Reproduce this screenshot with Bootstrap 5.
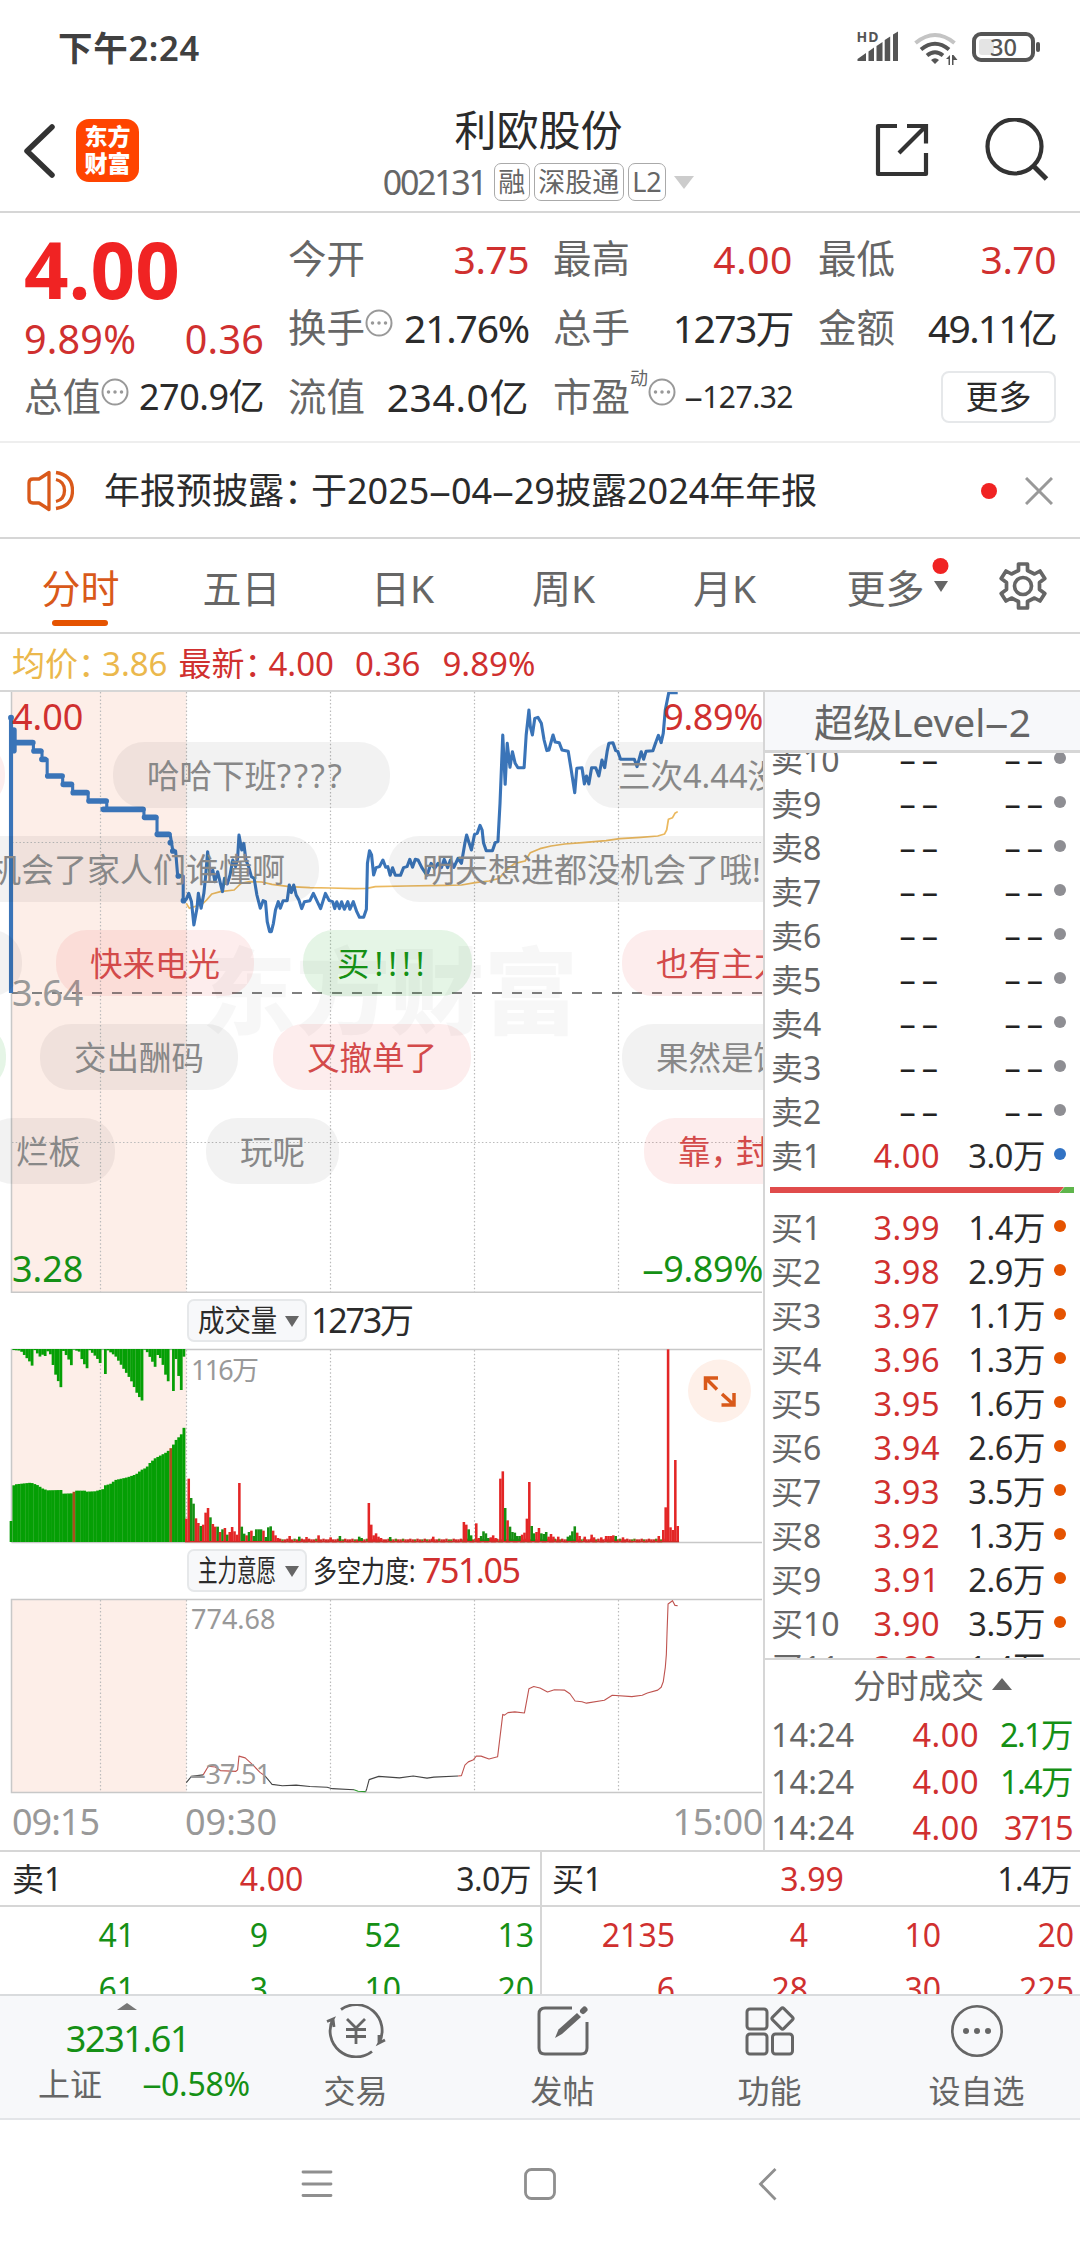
<!DOCTYPE html>
<html lang="zh-CN">
<head>
<meta charset="utf-8">
<meta name="viewport" content="width=device-width, initial-scale=1">
<title>利欧股份 002131</title>
<link href="https://cdn.jsdelivr.net/npm/bootstrap@5.3.0/dist/css/bootstrap.min.css" rel="stylesheet">
<style>
:root{--up:#d0302f;--down:#159015;--ink:#2b2b2b;--mute:#666;--soft:#999;--rule:#d6d6d6;--brand:#d9591a}
html,body{width:1080px;height:2248px;overflow:hidden}
body{font-family:"Noto Sans","Noto Sans CJK SC",sans-serif;color:var(--ink);background:#fff;line-height:1.2}
.c-up{color:var(--up)}.c-down{color:var(--down)}.c-mute{color:var(--mute)}.c-soft{color:var(--soft)}
svg{display:block;flex:none}
.wd{display:inline-block;transform:scaleX(1.22);margin:0 .05em}
.tight{letter-spacing:-9px}
.statusbar{height:96px;padding:0 40px 0 58px}
.clock{font-size:34.5px;font-weight:600;color:#404040;letter-spacing:.7px}
.titlebar{height:117px;border-bottom:2px solid var(--rule)}
.side-l{width:300px;padding:0 0 6px 22px}
.side-r{width:300px;padding:0 30px 7px 0}
.applogo{width:63px;height:63px;border-radius:13px;background:#ff4400;color:#fff;font-size:23px;line-height:27px;font-weight:900;margin-left:19px;padding-top:4px}
.sname{font-size:42px;line-height:50px}
.scode{font-size:34px;line-height:38px;letter-spacing:-2.3px}
.stag{border:1.5px solid #aaa;border-radius:7px;height:38px;line-height:35px;font-size:27px;padding:0 3.5px;color:var(--mute)}
.tri-d{width:0;height:0;border:solid transparent;border-width:13px 10px 0;border-top-color:#ccc}
.quotes{height:230px;border-bottom:2px solid #eee;padding:11px 24px 0}
.qrow{height:69px;font-size:39px;line-height:69px;white-space:nowrap}
.qlab{color:var(--mute);font-size:38.5px}
.qval{letter-spacing:-.5px}
.qwide{letter-spacing:.6px}
.col-a{width:240px}.col-b{width:241px;margin-left:24px}.col-c{width:240px;margin-left:24px}.col-d{width:238px;margin-left:25px}
.bigp{height:92px;line-height:90px;font-size:78px;font-weight:700;color:#f02323}
.chg{height:46px;line-height:46px;font-size:39.5px;letter-spacing:.2px}
.morebtn{width:115px;height:52px;border:2px solid #e6e8ea;border-radius:8px;font-size:33px;line-height:46px;padding:0;color:var(--ink)}
.sup-d{font-size:18px;line-height:20px;align-self:flex-start;margin-top:6px}
.notice{height:96px;border-bottom:2px solid var(--rule);padding:2px 27px 0}
.notice-t{font-size:36px;margin-left:30px}
.nclose{margin-left:28px}
.rdot{width:16px;height:16px;border-radius:50%;background:#f02323}
.ktabs{height:95px;border-bottom:2px solid var(--rule)}
.ktab{width:161px;height:93px;font-size:39px;line-height:97px;color:var(--mute);text-align:center;position:relative;padding:0}
.ktab.active{color:var(--brand)}
.ktab.active::after{content:"";position:absolute;left:52px;top:81px;width:56px;height:6px;border-radius:3px;background:#e55300}
.gear{margin:16px 0 0 32px}
.legendbar{height:58px;border-bottom:2px solid var(--rule);font-size:33px;line-height:60px;padding-left:12px;white-space:nowrap}
.mainarea{height:1158px}
.charts{width:763px;position:relative;overflow:hidden}
.charts>svg{position:absolute;left:0;top:0}
.overlay{position:absolute;white-space:nowrap}
.axis{font-size:36px;line-height:42px}
.axis-s{font-size:27px;line-height:30px;color:#999}
.bub{position:absolute;height:66px;border-radius:31px;padding:0 34px;font-size:32.5px;line-height:67px;white-space:nowrap;background:rgba(0,0,0,.05);color:#888}
.bub.r{background:rgba(235,50,50,.09);color:#d34a4a}
.bub.g{background:rgba(20,160,30,.11);color:#159015}
.wm{font-size:94px;font-weight:900;line-height:100px;color:rgba(0,0,0,.032)}
.indbar{position:absolute;left:187px;height:43px}
.indbtn{width:120px;height:43px;border:2px solid #e6e8ea;border-radius:7px;background:#f7f8fa;position:relative;padding:0 9px}
.indbtn .tri-d{border-width:11px 7px 0;border-top-color:#666}
.sq{display:inline-block;transform-origin:0 50%;white-space:nowrap;font-size:30px;line-height:38px}
.indval{font-size:34px;line-height:43px}
.book{width:317px;border-left:2px solid var(--rule)}
.bhead{height:61px;background:#f7f8fa;border-bottom:3px solid var(--rule);font-size:39px;line-height:60px;text-align:center}
.blist{height:905px;overflow:hidden}
.brow{height:44px;line-height:44px;font-size:32.5px;padding:0 12px 0 6px;white-space:nowrap}
.brow .b1{width:81px;color:var(--mute);font-size:32px}.brow .b2{width:88px;text-align:right;letter-spacing:.5px}.brow .b3{width:105px;text-align:right;letter-spacing:-.4px}
.dash{letter-spacing:6px;margin-right:-4px;color:#222}
.bdot{width:12px;height:12px;border-radius:50%;margin:-4px 0 0 9px}
.ratio{height:6px;margin:9px 6px 12px 5px}
.btitle{height:54px;border-top:2px solid var(--rule);font-size:32.8px;color:var(--mute)}
.trow{height:46.5px;line-height:46px;font-size:32.5px;padding:0 8px 0 6px}
.depth{height:144px;border-top:2px solid var(--rule);overflow:hidden}
.dcol{width:540px}.dcol+.dcol{border-left:2px solid var(--rule)}
.dhead{height:55px;border-bottom:2px solid var(--rule);font-size:32px;line-height:54px;padding:0 9px 0 12px}
.dcol+.dcol .dhead{padding:0 8px 0 10px}
.dnum{height:54px;line-height:55px;font-size:32px;text-align:right;padding-right:6px}
.dnum span{width:133px}
.footnav{height:126px;background:#f7f8fa;border-top:2px solid #d9dbdd;border-bottom:2px solid #e3e5e8;color:var(--mute);font-size:32px}
.fidx{width:252px}.fitem{width:207px}
.fitem span{margin-top:14px}
.sysnav{height:129px}
</style>
</head>
<body>
<div class="statusbar d-flex align-items-center justify-content-between">
  <span class="clock">下午2:24</span>
  <svg width="184" height="36" viewBox="857 30 184 36" fill="#555">
    <text x="857.500" y="42" font-size="14" font-weight="700" textLength="22">HD</text>
    <path d="M858.500 61v-2l8.500-6v8zM869.500 61V51.500l5.500-4V61zM877.500 61V46l6-4v19zM885.700 61V40l5.500-3.500V61zM894 61V34.500l5-3V61z"/>
    <g fill="none" stroke="#555" stroke-width="4"><path stroke="#c4c4c4" d="M916.500 43q19.500-16 39 0"/><path d="M922 49.500q14-11.500 28 0M928 55.500q8-6.500 16 0"/></g>
    <path d="M932 60q4-3.500 8 0l-4 4zM947 59l4-4v10h-1.500v-6zM953 55h1.500l4 5h-4v5H953z"/>
    <rect x="975" y="34" width="59" height="26" rx="7" fill="none" stroke="#555" stroke-width="4"/>
    <rect x="980" y="39" width="15" height="16" rx="3" fill="#e4e4e4"/><rect x="1037" y="42" width="4" height="10" rx="2"/>
    <text x="991" y="56" font-size="23.500" font-weight="500" textLength="27" lengthAdjust="spacingAndGlyphs">30</text>
  </svg>
</div>
<header class="titlebar d-flex justify-content-between">
  <div class="side-l d-flex align-items-center">
    <svg width="35" height="56" viewBox="22 123 35 56" fill="none" stroke="#333" stroke-width="5.500" stroke-linecap="round" stroke-linejoin="round"><path d="M52 127 27 151l25 24"/></svg>
    <div class="applogo text-center">东方<br>财富</div>
  </div>
  <div class="d-flex flex-column align-items-center" style="padding:9px 3px 0 0">
    <div class="sname">利欧股份</div>
    <div class="d-flex align-items-center mt-2"><span class="scode c-mute me-2">002131</span><span class="stag">融</span><span class="stag ms-1">深股通</span><span class="stag ms-1">L2</span><span class="tri-d ms-2"></span></div>
  </div>
  <div class="side-r d-flex align-items-center justify-content-end">
    <svg width="176" height="64" viewBox="874 119 176 64" fill="none" stroke="#333" stroke-width="4.200"><path stroke-linejoin="round" d="M897 127h-19v48h48v-21"/><path d="M907 127h19v17.500M899 154l27-27"/><circle cx="1014.500" cy="147.500" r="27"/><path stroke-width="5" d="m1033.500 167 13 13"/></svg>
  </div>
</header>

<section class="quotes d-flex">
  <div class="col-a">
    <div class="bigp">4.00</div>
    <div class="chg d-flex justify-content-between c-up"><span>9.89%</span><span>0.36</span></div>
    <div class="qrow d-flex justify-content-between"><span class="qlab d-flex">总值<svg class="mt-3" width="28" height="28" viewBox="0 0 28 28"><circle cx="14" cy="14" r="12.500" fill="none" stroke="#999" stroke-width="2"/><path d="M7.500 14h.01M14 14h.01M20.500 14h.01" stroke="#999" stroke-width="3.500" stroke-linecap="round"/></svg></span><span class="qval" style="font-size:36px">270.9亿</span></div>
  </div>
  <div class="col-b">
    <div class="qrow d-flex justify-content-between"><span class="qlab">今开</span><span class="qval c-up">3.75</span></div>
    <div class="qrow d-flex justify-content-between"><span class="qlab d-flex">换手<svg class="mt-3" width="28" height="28" viewBox="0 0 28 28"><circle cx="14" cy="14" r="12.500" fill="none" stroke="#999" stroke-width="2"/><path d="M7.500 14h.01M14 14h.01M20.500 14h.01" stroke="#999" stroke-width="3.500" stroke-linecap="round"/></svg></span><span class="qval" style="letter-spacing:-1.2px">21.76%</span></div>
    <div class="qrow d-flex justify-content-between"><span class="qlab">流值</span><span class="qval qwide">234.0亿</span></div>
  </div>
  <div class="col-c">
    <div class="qrow d-flex justify-content-between"><span class="qlab">最高</span><span class="qval qwide c-up">4.00</span></div>
    <div class="qrow d-flex justify-content-between"><span class="qlab">总手</span><span class="qval" style="letter-spacing:-1.6px">1273万</span></div>
    <div class="qrow d-flex justify-content-between"><span class="qlab d-flex">市盈<span class="sup-d">动</span><svg class="mt-3" width="28" height="28" viewBox="0 0 28 28"><circle cx="14" cy="14" r="12.500" fill="none" stroke="#999" stroke-width="2"/><path d="M7.500 14h.01M14 14h.01M20.500 14h.01" stroke="#999" stroke-width="3.500" stroke-linecap="round"/></svg></span><span class="qval" style="font-size:30px"><span class="wd">–</span>127.32</span></div>
  </div>
  <div class="col-d">
    <div class="qrow d-flex justify-content-between"><span class="qlab">最低</span><span class="qval c-up">3.70</span></div>
    <div class="qrow d-flex justify-content-between"><span class="qlab">金额</span><span class="qval" style="letter-spacing:-1.8px">49.11亿</span></div>
    <div class="qrow d-flex justify-content-end align-items-center"><button class="btn morebtn">更多</button></div>
  </div>
</section>

<section class="notice d-flex align-items-center">
  <svg width="47" height="42" viewBox="27 469 47 42" fill="none" stroke="#d9591a" stroke-width="3.300" stroke-linejoin="round"><path d="M49 471.500v37l-10-6.500h-6q-4 0-4-4v-16q0-4 4-4h6z"/><path d="M56 478.500q8.500 2 8.500 11t-8.500 11M56 471.500q16.500 2.500 16.500 18t-16.500 18" stroke-linecap="butt"/></svg>
  <span class="notice-t">年报预披露<span class="tight">：</span>于2025<span class="wd">–</span>04<span class="wd">–</span>29披露2024年年报</span>
  <span class="rdot ms-auto"></span>
  <svg class="nclose" width="28" height="28" viewBox="0 0 28 28" stroke="#999" stroke-width="3"><path d="M1 1l26 26M27 1 1 27"/></svg>
</section>

<nav class="ktabs nav flex-nowrap">
  <a class="ktab nav-link active">分时</a><a class="ktab nav-link">五日</a><a class="ktab nav-link">日K</a><a class="ktab nav-link">周K</a><a class="ktab nav-link">月K</a>
  <a class="ktab nav-link">更多<svg class="overlay" style="left:127px;top:18px" width="18" height="38"><circle cx="8.500" cy="9" r="8" fill="#f02323"/><path d="M2 24h14l-7 11z" fill="#666"/></svg></a>
  <svg class="gear" width="50" height="60" viewBox="998 555 50 60" fill="none" stroke="#666" stroke-width="3.700" stroke-linejoin="round"><circle cx="1023" cy="586" r="8.500"/><path d="M1018.500 564h9v6.500l7 3.500 5.500-3 4.800 7.500-5.300 4v7l5.300 4-4.800 7.500-5.500-3-7 3.500v6.500h-9v-6.500l-7-3.500-5.500 3-4.800-7.500 5.300-4v-7l-5.300-4 4.800-7.500 5.500 3 7-3.500z"/></svg>
</nav>

<div class="legendbar"><span style="color:#ebb84c">均价<span class="tight">：</span>3.86</span><span class="c-up" style="margin-left:11px">最新<span class="tight">：</span>4.00</span><span class="c-up" style="margin-left:21px">0.36</span><span class="c-up" style="margin-left:22px">9.89%</span></div>

<main class="mainarea d-flex">
  <div class="charts">
    <svg width="763" height="1158" viewBox="0 692 763 1158">
      <path fill="#fdeee8" d="M12 692h174.500v600H12zM12 1350h174.500v192H12zM12 1600h174.500v192H12z"/>
      <g stroke="#bbb" stroke-width="1.200" stroke-dasharray="1.500 2.200"><path d="M100.500 692v600M186.500 692v600M330.500 692v600M474.500 692v600M618.500 692v600M12 842.500h750M12 1142.500h750"/><path d="M100.500 1350v192M186.500 1350v192M330.500 1350v192M474.500 1350v192M618.500 1350v192M100.500 1600v192M186.500 1600v192M330.500 1600v192M474.500 1600v192M618.500 1600v192"/></g>
      <path stroke="#c8c8c8" stroke-width="1.500" fill="none" d="M11.500 692v600.300H762M11.500 1542.500V1349.500H762M11.500 1542.500H762M762 1599.500H11.500v193H762"/>
      <path stroke="#808080" stroke-width="2" stroke-dasharray="10 10" d="M12 993h750"/>
      <g transform="translate(0 530) scale(.34436 .33333)" fill="none" stroke-linejoin="round">
        <path stroke="#ebb95f" stroke-width="5" d="M541 1120 550 1135 565 1130 585 1125 600 1110 615 1092 640 1085 680 1080 692 1068 700 1060 725 1055 760 1056 790 1063 840 1070 900 1073 960 1074 1030 1076 1065 1075 1090 1070 1180 1068 1290 1066 1340 1065 1380 1058 1420 1053 1450 1045 1470 1020 1495 1000 1525 993 1540 968 1568 956 1600 948 1640 942 1700 937 1760 932 1800 926 1860 922 1910 918 1930 912 1936 900 1941 868 1953 863 1960 850 1968 845"/>
        <g stroke="#3a74b8">
          <path stroke-width="12" d="M32 565V1389"/>
          <path stroke-width="17" stroke-linecap="round" d="M32 563v.1M40 600v62M45 638H95M99 663H118M122 688H130M139 738H180M184 763H207M213 788H252M259 813H308M300 838H415M420 862H452M457 913H490M495 938v.1M502 963v.1M518 1038v.1M533 1112v.1"/>
          <path stroke-width="9" d="M97 638V663H122V688H137V738H182V763H211V788H256V813H310V838H418V862H456V913H494L502 963H510L516 1038H532V1112"/>
          <path stroke-width="9" d="M532 1112 541 1108 548 1090 556 1115 563 1185 572 1135 576 1090 584 1135 592 1090 597 1040 603 965 610 1035 618 1020 624 1055 632 1025 640 1060 646 1085 652 1045 660 1062 668 1035 676 990 684 1010 690 985 694 915 702 960 708 940 714 990 722 1010 730 1040 738 1045 746 1095 756 1135 764 1112 771 1115 776 1175 783 1205 788 1205 794 1180 800 1140 808 1115 814 1135 822 1112 834 1112 840 1065 846 1088 853 1065 860 1095 868 1110 876 1136 884 1115 900 1112 910 1090 920 1112 931 1136 945 1090 956 1112 966 1115 972 1136 978 1115 986 1136 992 1115 1000 1138 1010 1115 1016 1138 1026 1115 1036 1145 1044 1162 1056 1162 1064 1138 1067 1000 1073 962 1079 975 1085 1035 1092 1013 1102 1010 1112 990 1120 1012 1126 1010 1133 1036 1140 1013 1148 1036 1163 1036 1172 1013 1182 1010 1190 988 1198 1012 1206 988 1214 990 1225 1013 1240 1036 1252 1000 1262 1015 1272 1000 1282 1013 1290 988 1300 1013 1308 990 1318 1012 1330 985 1340 1000 1350 940 1355 915 1362 938 1369 960 1378 913 1386 910 1394 886 1400 900 1404 938 1412 962 1430 962 1438 938 1446 935 1452 820 1460 615 1467 763 1473 640 1481 712 1488 665 1496 700 1504 713 1522 713 1528 615 1536 540 1540 590 1546 615 1553 565 1562 562 1572 580 1580 630 1588 662 1594 660 1606 615 1612 636 1624 638 1632 660 1650 664 1658 715 1669 788 1675 715 1690 713 1697 762 1703 738 1710 762 1718 713 1730 713 1739 738 1748 690 1756 713 1763 665 1768 640 1780 638 1788 662 1794 664 1802 688 1842 688 1850 710 1862 665 1869 688 1876 664 1896 662 1904 638 1912 616 1920 638 1926 610 1932 540 1942 488 1968 488"/>
        </g>
      </g>
      <g id="vol" transform="translate(0 1280) scale(.34436 .33333)"></g>
      <g transform="translate(0 1680) scale(.34436 .3623)" fill="none" stroke-width="3.200" stroke-linejoin="round">
        <path stroke="#444" d="M541 283 556 266 590 262M770 265 790 288 820 292 860 290 900 294 950 296 965 300 1028 303M1062 308 1065 300 1072 275 1100 266 1160 270 1200 265 1240 271 1260 268 1330 265"/>
        <path stroke="#2c9a2c" d="M1028 303 1040 307 1062 308"/>
        <path stroke="#bf5450" d="M590 262 605 238 625 240 640 250 685 252 690 248 694 210 712 215 735 235 755 255 770 265M1330 265 1340 264 1350 235 1360 226 1375 220 1383 210 1397 210 1420 218 1445 212 1460 95 1465 97 1475 90 1495 88 1523 91 1536 24 1550 18 1568 22 1590 33 1610 27 1640 28 1655 38 1670 58 1690 60 1703 64 1755 56 1778 42 1835 46 1865 42 1880 36 1910 28 1920 20 1926 5 1932-35 1935-70 1937-130 1940-210 1953-219 1960-206 1968-205"/>
      </g>
      <circle cx="719.500" cy="1391" r="31.500" fill="#fef0e9"/>
      <path fill="none" stroke="#d9591a" stroke-width="3.500" d="M718 1378h-12.500v12M706 1378.500l11 11M721.500 1405H734v-12M722 1394l11 10"/>
    </svg>
    <div class="overlay wm" style="left:202px;top:249px">东方财富</div>

    <span class="overlay axis c-up" style="left:12px;top:4px">4.00</span>
    <span class="overlay axis c-up" style="right:0;top:4px;letter-spacing:-.3px">9.89%</span>
    <span class="overlay axis c-soft" style="left:12px;top:280px">3.64</span>
    <span class="overlay axis c-down" style="left:12px;top:556px">3.28</span>
    <span class="overlay axis c-down" style="right:0;top:556px;letter-spacing:-.3px"><span class="wd">–</span>9.89%</span>

    <span class="bub r" style="right:758px;top:50px">红</span>
    <span class="bub" style="left:113px;top:50px;width:277px">哈哈下班<span style="letter-spacing:2.8px">????</span></span>
    <span class="bub" style="left:584px;top:50px">三次4.44没</span>
    <span class="bub" style="right:444px;top:144px;font-size:33px">没机会了家人们谁懂啊</span>
    <span class="bub" style="left:388px;top:144px;font-size:33px">明天想进都没机会了哦!</span>
    <span class="bub" style="right:741px;top:238px">了</span>
    <span class="bub r" style="left:56px;top:238px">快来电光</span>
    <span class="bub g" style="left:303px;top:238px;width:169px;letter-spacing:5px">买!!!!</span>
    <span class="bub r" style="left:622px;top:238px">也有主力</span>
    <span class="bub g" style="right:757px;top:332px">买</span>
    <span class="bub" style="left:40px;top:332px">交出酬码</span>
    <span class="bub r" style="left:273px;top:332px">又撤单了</span>
    <span class="bub" style="left:622px;top:332px">果然是饵</span>
    <span class="bub" style="right:648px;top:426px">烂板</span>
    <span class="bub" style="left:206px;top:426px">玩呢</span>
    <span class="bub r" style="left:644px;top:426px">靠<span style="letter-spacing:-7px">，</span>封板</span>

    <div class="indbar d-flex align-items-center" style="top:607px"><span class="indbtn"><span class="sq" style="transform:scaleX(.88)">成交量</span><span class="tri-d overlay" style="left:96px;top:15px"></span></span><span class="indval ms-1" style="letter-spacing:-2.2px">1273万</span></div>
    <span class="overlay axis-s" style="left:191px;top:663px;letter-spacing:-1.8px">116万</span>
    <div class="indbar d-flex align-items-center" style="top:857px"><span class="indbtn"><span class="sq" style="transform:scaleX(.65)">主力意愿</span><span class="tri-d overlay" style="left:96px;top:15px"></span></span><span class="sq" style="margin-left:6px;width:109px;transform:scaleX(.8)">多空力度:</span><span class="indval c-up" style="letter-spacing:-1.5px">751.05</span></div>
    <span class="overlay axis-s" style="left:191px;top:912px">774.68</span>
    <span class="overlay axis-s" style="left:190px;top:1067px;letter-spacing:-.8px"><span class="wd">–</span>37.51</span>
    <span class="overlay axis c-soft" style="left:12px;top:1109px;letter-spacing:-1px">09:15</span>
    <span class="overlay axis c-soft" style="left:185px;top:1109px">09:30</span>
    <span class="overlay axis c-soft" style="right:0;top:1109px;letter-spacing:-.3px">15:00</span>
  </div>

  <aside class="book">
    <div class="bhead c-mute">超级Level<span class="wd">–</span>2</div>
    <div class="blist" id="blist"></div>
    <div class="btitle d-flex align-items-center justify-content-center"><span style="margin-left:20px">分时成交</span><svg class="ms-2" width="20" height="26"><path d="M0 17 10 5l10 12z" fill="#666"/></svg></div>
    <div id="ticks"></div>
  </aside>
</main>

<section class="depth d-flex" id="depth"></section>

<footer class="footnav d-flex">
  <div class="fidx position-relative">
    <svg class="overlay" style="left:117px;top:7px" width="20" height="8"><path d="M0 7 10 0l10 7z" fill="#777"/></svg>
    <div class="text-center c-down" style="font-size:36px;line-height:44px;margin-top:21px;padding-left:3px;letter-spacing:-1.4px">3231.61</div>
    <div class="d-flex justify-content-between" style="line-height:46px;padding:0 2px 0 38px"><span>上证</span><span class="c-down" style="letter-spacing:-.2px"><span class="wd">–</span>0.58%</span></div>
  </div>
  <div class="fitem d-flex flex-column align-items-center pt-2">
    <svg width="62" height="54" viewBox="-31 -27 62 54" fill="none" stroke="#666" stroke-width="2.800"><path d="M-15-21.500A26 26 0 0 1 23 12l6-3M23 12l0-8"/><path d="M16 20.500A26 26 0 0 1-23-12l-6 2.500M-23-12l1 8"/><path d="M-9-12-0-3 9-12M0-3v16M-10-1.500h20M-10 5.500h20"/></svg><span>交易</span>
  </div>
  <div class="fitem d-flex flex-column align-items-center pt-2">
    <svg width="54" height="54" viewBox="-27 -27 54 54" fill="none" stroke="#666" stroke-width="3"><path d="M9-23h-27q-6 0-6 6v34q0 6 6 6h36q6 0 6-6V-9"/><path d="m-8 7 3.500-8.500L14-18l4 4L-1 3z" fill="#666" stroke="none"/><path stroke-width="6" stroke-linecap="round" d="m20-20 1.500-1.500"/></svg><span>发帖</span>
  </div>
  <div class="fitem d-flex flex-column align-items-center pt-2">
    <svg width="54" height="54" viewBox="-27 -27 54 54" fill="none" stroke="#666" stroke-width="3" stroke-linejoin="round"><rect x="-23" y="-22" width="20" height="20" rx="3"/><rect x="-23" y="3" width="20" height="20" rx="3"/><rect x="2.500" y="3" width="20" height="20" rx="3"/><rect x="4.500" y="-20.500" width="16" height="16" rx="2" transform="rotate(45 12.500 -12.500)"/></svg><span>功能</span>
  </div>
  <div class="fitem d-flex flex-column align-items-center pt-2">
    <svg width="54" height="54" viewBox="-27 -27 54 54"><circle r="24.700" fill="none" stroke="#666" stroke-width="2.600"/><path d="M-11 0h.01M0 0h.01M11 0h.01" stroke="#666" stroke-width="6" stroke-linecap="round"/></svg><span>设自选</span>
  </div>
</footer>
<div class="sysnav">
  <svg width="1080" height="129" viewBox="0 2119 1080 129" fill="none" stroke="#8f8f8f" stroke-width="2.800" stroke-linecap="round"><path d="M303 2171h28M303 2183h28M303 2194.500h28"/><rect x="525.500" y="2168.500" width="29" height="29" rx="6"/><path stroke-linecap="butt" d="m775.500 2168-15 15 15 15.500"/></svg>
</div>

<script src="https://cdn.jsdelivr.net/npm/bootstrap@5.3.0/dist/js/bootstrap.bundle.min.js"></script>
<script>
/* order book */
const row=(a,p,q,c,e)=>`<div class="brow d-flex align-items-center"><span class="b1">${a}</span><span class="b2 ${e?'':'c-up'}">${e?'<span class="dash">––</span>':p}</span><span class="b3">${e?'<span class="dash">––</span>':q}</span><span class="bdot" style="background:${c}"></span></div>`;
let h='<div style="margin-top:-15px"></div>';
for(let i=10;i>1;i--)h+=row('卖'+i,'','','#8e8e93',1);
h+=row('卖1','4.00','3.0万','#3273c4');
h+='<svg class="ratio" width="304" height="6"><path fill="#e04b4b" d="M0 0h294l-5 6H0z"/><path fill="#5fb54b" d="M294.500 0H304v6h-14.500z"/></svg><div style="height:1px"></div>';
['1.4','2.9','1.1','1.3','1.6','2.6','3.5','1.3','2.6','3.5','1.4'].forEach((q,i)=>h+=row('买'+(i+1),(3.99-i/100).toFixed(2),q+'万','#e55300'));
blist.innerHTML=h;
ticks.innerHTML=[['2.1万','c-down'],['1.4万','c-down'],['3715','c-up']].map(t=>`<div class="trow d-flex"><span class="c-mute" style="width:110px">14:24</span><span class="c-up text-end" style="width:98px;letter-spacing:.5px">4.00</span><span class="${t[1]} text-end flex-fill" style="letter-spacing:-1.6px">${t[0]}</span></div>`).join('');
/* queue detail */
depth.innerHTML=[['卖1','4.00','3.0万','c-down',[[41,9,52,13],[61,3,10,20]]],['买1','3.99','1.4万','c-up',[[2135,4,10,20],[6,28,30,225]]]].map(d=>`<div class="dcol"><div class="dhead d-flex justify-content-between"><span style="width:90px">${d[0]}</span><span class="c-up">${d[1]}</span><span class="text-end" style="width:90px;letter-spacing:-.6px">${d[2]}</span></div>${d[4].map(r=>`<div class="dnum d-flex justify-content-end ${d[3]}">${r.map(n=>`<span>${n}</span>`).join('')}</div>`).join('')}</div>`).join('');
/* volume bars */
let s='';const G='#059f05',R='#e32626',bar=(x,y,w,hh,c)=>s+=`<rect x="${x}" y="${y}" width="${w}" height="${hh}" fill="${c}"/>`;
const at=(p,x)=>{let i=0;while(i<p.length-2&&p[i+1][0]<x)i++;const[a,b]=[p[i],p[i+1]];return a[1]+(b[1]-a[1])*Math.min(1,(x-a[0])/(b[0]-a[0]||1))};
const low=[[36,618],[45,613],[90,608],[110,616],[122,625],[137,631],[178,630],[182,641],[210,640],[218,632],[245,632],[250,635],[275,634],[300,627],[305,616],[320,612],[335,600],[370,592],[395,583],[410,570],[425,563],[435,549],[450,535],[465,527],[485,516],[500,500],[512,478],[525,466],[534,443]];
const top_=[[28,209],[60,212],[90,250],[97,266],[98,208],[106,215],[114,234],[119,222],[131,228],[135,210],[146,222],[155,260],[163,290],[172,310],[180,330],[181,208],[190,222],[203,245],[211,266],[212,208],[230,215],[240,245],[256,270],[257,208],[262,212],[280,232],[293,253],[294,208],[302,208],[303,282],[311,282],[312,210],[335,228],[360,268],[380,300],[400,345],[417,368],[418,208],[425,212],[440,240],[452,264],[453,225],[462,225],[475,260],[482,290],[491,310],[492,208],[497,208],[498,333],[506,333],[507,237],[513,237],[514,285],[522,290],[523,330],[529,330],[530,230],[537,230]];
bar(28,723,8,63,G);
for(let x=36;x<534;x+=7.6){const c=x+3.8,y=at(low,c);bar(x,y,8.4,786-y,(Math.abs(c-211)<4||Math.abs(c-494)<4)?'#a8501c':G);const t=at(top_,c);bar(x,207,8,t-207,G)}
const sp=`541,70r 548,190r 555,132g 562,115g 569,71r 576,57r 583,48g 590,52r 597,88r 604,102r 611,74g 618,54r 625,46r 632,46g 639,30r 646,38g 653,42r 660,22g 667,30r 674,45r 681,32r 688,22r 695,177r 702,46g 709,25g 716,20r 723,30g 730,34r 737,18g 744,38g 751,38g 758,38g 765,34r 772,15g 779,44g 786,47g 793,34r 800,20r 807,12r 841,18r 869,16g 890,15r 925,20r 960,14r 987,18g 1043,16g 1050,12g 1071,117r 1078,52r 1085,20r 1092,26r 1099,16r 1106,12r 1133,15g 1258,16r 1347,60r 1354,52r 1361,38g 1368,20g 1383,56r 1390,12r 1397,18g 1404,32g 1411,26g 1418,12g 1425,14r 1432,20r 1439,12r 1453,190r 1460,212r 1467,102g 1474,65r 1481,46g 1488,30g 1495,28g 1502,18g 1509,18g 1516,22r 1523,28r 1530,70r 1537,180r 1544,48g 1551,26g 1558,30r 1565,42r 1572,26g 1579,24g 1586,30g 1593,16r 1600,24r 1607,16r 1621,16r 1649,16g 1656,20g 1662,32g 1669,47g 1676,28r 1683,18r 1698,16r 1718,22r 1725,14r 1746,14r 1760,18r 1767,18r 1774,18r 1781,20r 1788,18g 1809,14r 1913,18r 1926,36r 1933,104r 1940,578r 1947,44r 1954,36r 1961,246r 1968,48r`.split(' ').map(v=>{const m=v.match(/(\d+),(\d+)(\w)/);return[+m[1],+m[2],m[3]]});
for(let x=810,k=0;x<1930;x+=7,k++)bar(x,778-(k%3==0?2:0),7,9,(k%5==1||k%11==4)?'#5f7f18':'#cf2a26');
sp.forEach(v=>bar(v[0]-3.6,786-v[1],7.4,v[1],v[2]=='g'?'#158f12':R));
bar(537,783,870+565,4,'#cf2a26');
vol.innerHTML=s;
</script>
</body>
</html>
